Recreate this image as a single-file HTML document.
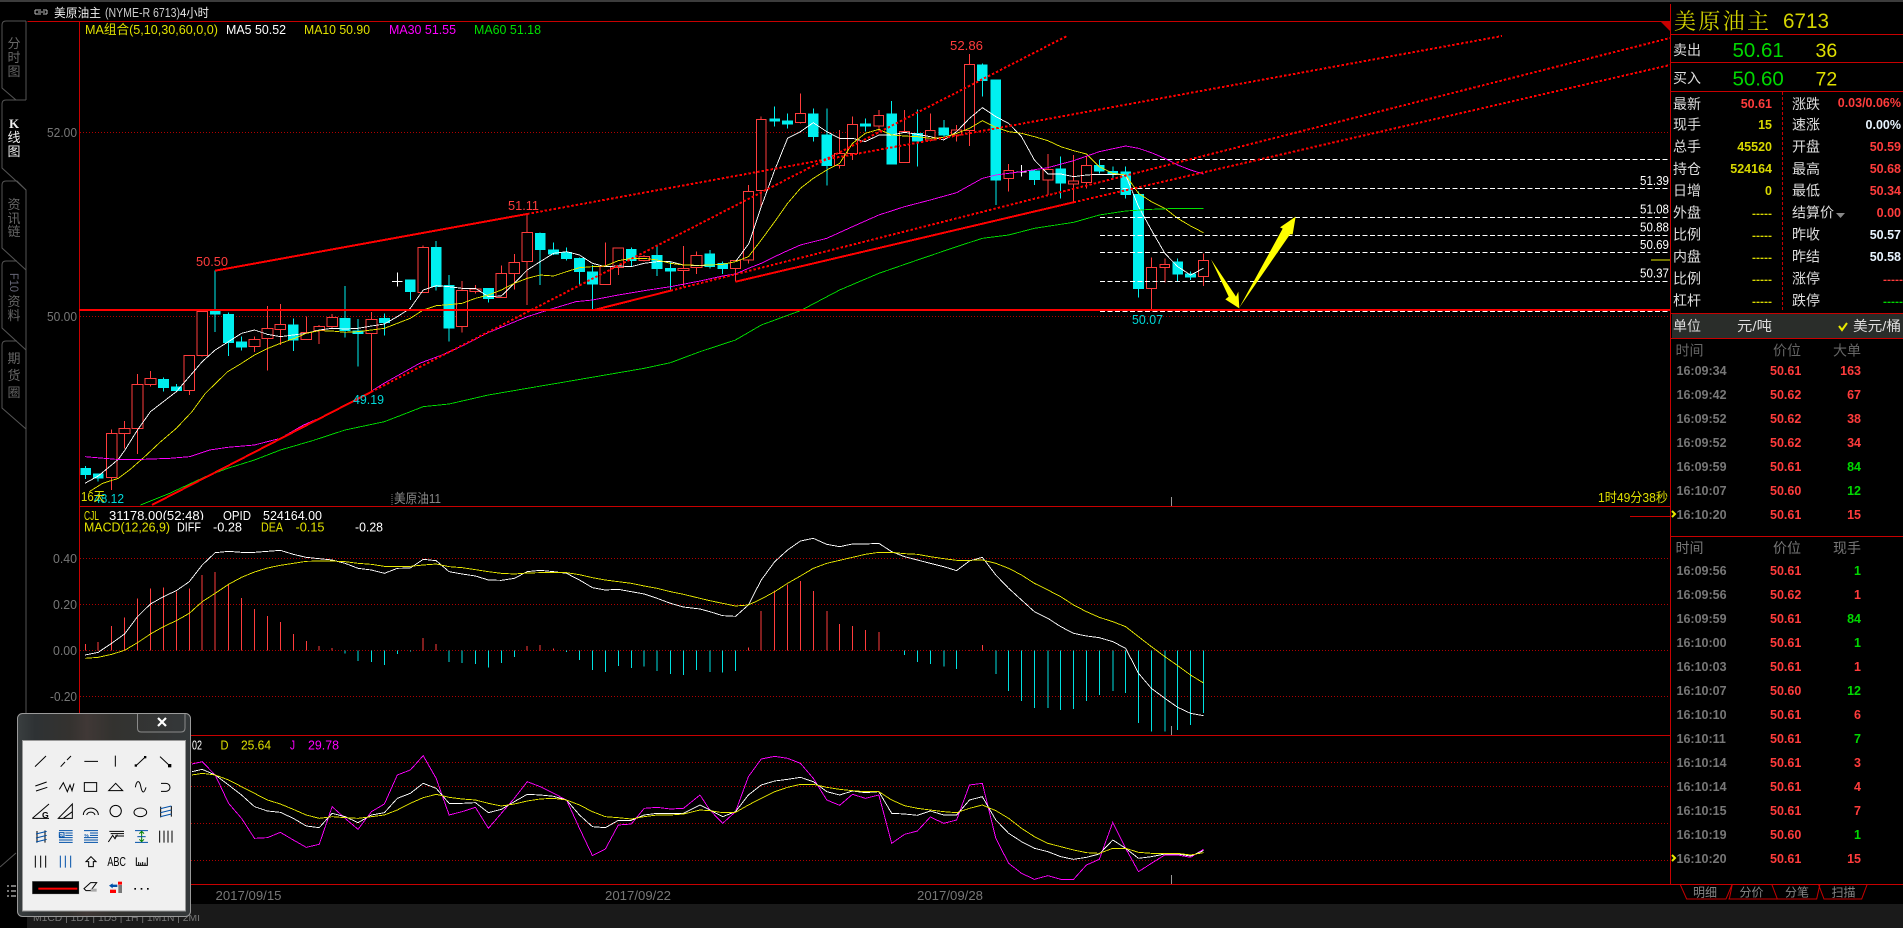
<!DOCTYPE html>
<html><head><meta charset="utf-8"><title>美原油主</title>
<style>
html,body{margin:0;padding:0;background:#000;width:1903px;height:928px;overflow:hidden}
svg{display:block}
text{font-family:"Liberation Sans","Noto Sans CJK SC",sans-serif;font-size:13px}
.cn{font-size:14px;fill:#ddd}
.b{font-weight:bold;font-size:12.5px}
.r{text-anchor:end}
.n{vector-effect:non-scaling-stroke;fill:none;shape-rendering:crispEdges}
polyline.n{stroke-width:.9}
.nn{vector-effect:non-scaling-stroke}
.g{stroke:#b00000;stroke-width:1;stroke-dasharray:1 2;fill:none}
.w{stroke:#fff;stroke-width:1;stroke-dasharray:5 2.5;fill:none;shape-rendering:crispEdges}
.d{stroke:#f00;stroke-width:2;stroke-dasharray:2.5 2;fill:none;shape-rendering:crispEdges}
.t{stroke:#f00;stroke-width:2;fill:none;shape-rendering:crispEdges}
.l{stroke:#c80000;stroke-width:1;fill:none;shape-rendering:crispEdges}
.tab{stroke:#555;stroke-width:1;fill:none}
.ic{vector-effect:non-scaling-stroke;stroke:#000;stroke-width:1;fill:none}
.bl{vector-effect:non-scaling-stroke;stroke:#0050a8;stroke-width:1;fill:none}
</style></head><body>
<svg xmlns="http://www.w3.org/2000/svg" width="1903" height="928" viewBox="0 0 1903 928">
<defs><clipPath id="c1"><rect x="80" y="507" width="400" height="13"/></clipPath>
<clipPath id="c2"><rect x="27" y="915" width="300" height="13"/></clipPath>
<linearGradient id="tb" x1="0" y1="0" x2="1" y2="0"><stop offset="0" stop-color="#3a3f40"/><stop offset=".1" stop-color="#2e3234"/><stop offset=".3" stop-color="#34322f"/><stop offset=".4" stop-color="#403836"/><stop offset=".55" stop-color="#33322f"/><stop offset="1" stop-color="#34383a"/></linearGradient></defs>
<rect width="1903" height="928" fill="#000"/>
<rect width="1903" height="2" fill="#3c3c3c"/>
<rect x="27" y="904" width="1876" height="24" fill="#1a1a1a"/>

<!-- title -->
<path d="M35 10H41M35 14H41M35 10V14M47 10H43M47 14H43M47 10V14M38 12H45" stroke="#bbb" stroke-width="1" fill="none" shape-rendering="crispEdges"/>
<text x="54" y="17" fill="#eee" style="font-size:12px" textLength="47" lengthAdjust="spacingAndGlyphs">美原油主</text>
<text x="105" y="17" fill="#ccc" textLength="75" lengthAdjust="spacingAndGlyphs">(NYME-R 6713)</text>
<text x="180" y="17" fill="#eee" style="font-size:12px" textLength="29" lengthAdjust="spacingAndGlyphs">4小时</text>

<!-- left tabs -->
<path class="tab" d="M26 21H6Q2 21 2 25V88L16 100H26M26 21V100"/>
<path class="tab" d="M26 100H6Q2 100 2 104V168L26 190"/>
<path class="tab" d="M6 181H17L26 190V900M6 181Q2 181 2 185V248L26 270"/>
<path class="tab" d="M6 261H17M6 261Q2 261 2 265V328L26 350"/>
<path class="tab" d="M6 341H17M6 341Q2 341 2 345V408L26 429"/>
<path class="tab" d="M0 867L16 853"/>
<g fill="#666" text-anchor="middle">
<text x="14" y="48" style="font-size:13px" fill="#666">分</text><text x="14" y="62" style="font-size:13px">时</text><text x="14" y="76" style="font-size:13px">图</text>
<text x="14" y="128" style="font-size:13px;font-weight:bold;font-family:'Liberation Serif',serif" fill="#eee">K</text><text x="14" y="142" style="font-size:13px" fill="#eee">线</text><text x="14" y="156" style="font-size:13px" fill="#eee">图</text>
<text x="14" y="209" style="font-size:13px">资</text><text x="14" y="223" style="font-size:13px">讯</text><text x="14" y="236" style="font-size:13px">链</text>
<text transform="translate(10,273) rotate(90)" text-anchor="start" style="font-size:12px" fill="#667" textLength="19" lengthAdjust="spacingAndGlyphs">F10</text><text x="14" y="306" style="font-size:13px">资</text><text x="14" y="320" style="font-size:13px">料</text>
<text x="14" y="363" style="font-size:13px">期</text><text x="14" y="380" style="font-size:13px">货</text><text x="14" y="397" style="font-size:13px">圈</text>
</g>
<g fill="#777"><rect x="7" y="885" width="2" height="2"/><rect x="7" y="890" width="2" height="2"/><rect x="7" y="895" width="2" height="2"/><rect x="11" y="885" width="5" height="2"/><rect x="11" y="890" width="5" height="2"/><rect x="11" y="895" width="5" height="2"/></g>

<!-- grid -->
<path class="g" d="M80 132.5H1670M80 316.5H1670M80 558.5H1670M80 604.5H1670M80 650.5H1670M80 696.5H1670M80 762.5H1670M80 786.5H1670M80 823.5H1670M80 860.5H1670"/>
<path class="l" d="M27.5 21.5H1670M79.5 21.5V884M1670.5 4V884M79 506.5H1670M79 735.5H1670M27 884.5H1903M1630 516.5H1670"/>
<path d="M1661 22H1670V31Z" fill="#c80000"/>
<path d="M1171.5 497V506M1171.5 726V735M1171.5 875V884" stroke="#999" fill="none" shape-rendering="crispEdges"/>

<!-- axis labels -->
<g fill="#777">
<text x="77" y="137" class="r" textLength="30" lengthAdjust="spacingAndGlyphs">52.00</text>
<text x="77" y="321" class="r" textLength="30" lengthAdjust="spacingAndGlyphs">50.00</text>
<text x="77" y="563" class="r" textLength="24" lengthAdjust="spacingAndGlyphs">0.40</text>
<text x="77" y="609" class="r" textLength="24" lengthAdjust="spacingAndGlyphs">0.20</text>
<text x="77" y="655" class="r" textLength="24" lengthAdjust="spacingAndGlyphs">0.00</text>
<text x="77" y="701" class="r" textLength="27" lengthAdjust="spacingAndGlyphs">-0.20</text>
<text x="215.5" y="900" textLength="66" lengthAdjust="spacingAndGlyphs">2017/09/15</text>
<text x="605" y="900" textLength="66" lengthAdjust="spacingAndGlyphs">2017/09/22</text>
<text x="917" y="900" textLength="66" lengthAdjust="spacingAndGlyphs">2017/09/28</text>
</g>

<!-- left candles -->
<g transform="scale(.44643,.33333)">
<path class="nn" shape-rendering="crispEdges" stroke="#ff3c3c" fill="#000" d="M250 1288V1300M250 1433V1470M238 1300H262V1433H238ZM279 1263V1285M279 1300V1345M267 1285H291V1300H267ZM308 1122V1153M308 1286V1362M296 1153H320V1286H296ZM337 1113V1135M337 1153V1160M325 1135H349V1153H325ZM424 1171V1185M412 1066H436V1171H412ZM453 1067V1070M441 934H465V1067H441ZM570 1010V1019M570 1039V1056M558 1019H582V1039H558ZM599 918V986M599 1015V1112M587 986H611V1015H587ZM628 912V973M628 988V1035M616 973H640V988H616ZM686 950V998M674 998H698V1019H674ZM715 975V980M715 992V1032M703 980H727V992H703ZM744 942V952M744 980V985M732 952H756V980H732ZM832 936V958M832 1000V1175M820 958H844V1000H820ZM948 737V742M936 742H960V878H936ZM1035 843V871M1035 980V997M1023 871H1047V980H1023ZM1065 855V867M1065 875V880M1053 867H1077V875H1053ZM1123 797V820M1111 820H1135V892H1111ZM1152 762V787M1152 820V868M1140 787H1164V820H1140ZM1181 640V697M1181 785V915M1169 697H1193V785H1169ZM1356 727V800M1344 800H1368V853H1344ZM1385 742V744M1385 802V825M1373 744H1397V802H1373ZM1443 765V770M1443 782V785M1431 770H1455V782H1431ZM1531 738V806M1531 812V860M1519 806H1543V812H1519ZM1560 755V767M1560 802V822M1548 767H1572V802H1548Z"/>
<path class="nn" shape-rendering="crispEdges" stroke="#00f0f0" fill="#00f0f0" d="M192 1398V1437M181 1405H203V1424H181ZM220 1422V1445M209 1422H231V1434H209ZM366 1132V1175M355 1138H377V1163H355ZM395 1152V1175M384 1161H406V1172H384ZM482 812V996M471 934H493V942H471ZM512 937V1068M501 943H523V1028H501ZM541 1010V1052M530 1026H552V1041H530ZM657 955V1053M646 975H668V1020H646ZM773 858V1013M762 955H784V992H762ZM802 957V1100M791 993H813V1001H791ZM861 940V1007M850 955H872V968H850ZM919 838V900M908 840H930V875H908ZM977 723V872M966 742H988V860H966ZM1006 825V1025M995 856H1017V984H995ZM1094 865V908M1083 865H1105V896H1083ZM1210 697V855M1199 700H1221V749H1199ZM1240 728V765M1229 750H1251V762H1229ZM1269 742V782M1258 758H1280V776H1258ZM1298 772V855M1287 775H1309V815H1287ZM1327 795V927M1316 816H1338V852H1316ZM1414 742V800M1403 748H1425V782H1403ZM1472 738V828M1461 766H1483V806H1461ZM1502 785V868M1491 805H1513V813H1491Z"/>
<path class="nn" shape-rendering="crispEdges" stroke="#fff" fill="none" d="M878 845H902M890 817V860"/>
<polyline class="n" stroke="#fff" points="190,1450 220,1428 250,1395 265,1378 280,1350 308,1290 337,1235 366,1205 395,1175 424,1130 453,1085 482,1050 512,1025 541,1000 570,990 599,1003 628,1010 657,1005 686,1000 715,990 744,985 773,987 802,985 832,978 861,972 890,950 919,925 948,870 977,857 1006,860 1035,865 1065,865 1094,890 1123,888 1152,850 1181,810 1210,785 1240,760 1269,755 1298,765 1327,790 1356,800 1385,798 1414,800 1443,790 1472,785 1502,785 1531,795 1568,797"/>
<polyline class="n" stroke="#e8e800" points="200,1475 230,1450 265,1435 290,1410 320,1375 360,1325 395,1285 430,1235 460,1180 510,1115 541,1090 570,1065 600,1045 628,1030 660,1015 686,1000 715,992 744,993 773,997 802,995 832,990 861,985 890,970 919,955 948,930 977,917 1006,914 1035,910 1065,895 1094,885 1123,870 1152,850 1181,835 1210,825 1240,828 1269,815 1298,803 1327,800 1356,798 1385,782 1414,775 1443,775 1472,780 1502,790 1531,795 1568,796"/>
<polyline class="n" stroke="#f0f" points="190,1370 260,1378 320,1378 380,1375 425,1370 470,1350 510,1342 570,1335 628,1315 680,1275 740,1240 800,1200 860,1150 940,1090 990,1065 1040,1035 1090,1000 1181,950 1240,925 1290,905 1327,900 1385,885 1443,872 1502,860 1568,843"/>
<polyline class="n" stroke="#00e000" points="315,1515 380,1480 460,1430 510,1405 570,1380 628,1350 700,1322 773,1290 861,1265 900,1245 948,1220 1006,1212 1094,1185 1181,1165 1269,1145 1356,1125 1443,1105 1502,1088 1568,1055"/>
</g>
<!-- right candles -->
<g transform="translate(700,0) scale(.61245,.33333)">
<path class="nn" shape-rendering="crispEdges" stroke="#ff3c3c" fill="#000" d="M58 806V845M50 782H66V806H50ZM79 555V574M79 780V790M71 574H87V780H71ZM100 350V358M100 572V620M92 358H108V572H92ZM164 280V340M164 368V370M156 340H172V368H156ZM228 390V460M228 497V505M220 460H236V497H220ZM249 350V373M249 460V480M241 373H257V460H241ZM292 330V346M292 378V395M284 346H300V378H284ZM334 330V395M326 395H342V488H326ZM376 340V392M376 420V425M368 392H384V420H368ZM419 375V390M419 405V425M411 390H427V405H411ZM440 162V193M440 392V438M432 193H448V392H432ZM504 492V511M504 536V575M496 511H512V536H496ZM568 462V508M568 540V585M560 508H576V540H560ZM610 465V543M610 552V608M602 543H618V552H602ZM631 470V496M631 548V565M623 496H639V548H623ZM737 773V802M737 866V927M729 802H745V866H729ZM759 775V793M759 803V848M751 793H767V803H751ZM822 760V781M822 830V858M814 781H830V830H814Z"/>
<path class="nn" shape-rendering="crispEdges" stroke="#00f0f0" fill="#00f0f0" d="M16 750V805M8 762H24V800H8ZM37 785V822M29 790H45V806H29ZM122 320V380M114 357H130V363H114ZM143 340V385M135 363H151V372H135ZM185 325V425M177 342H193V410H177ZM207 325V557M199 405H215V497H199ZM270 355V395M262 372H278V378H262ZM313 303V492M305 342H321V492H305ZM355 328V500M347 400H363V423H347ZM398 360V420M390 384H406V405H390ZM461 190V290M453 195H469V242H453ZM483 240V615M475 240H491V540H475ZM546 510V555M538 513H554V538H538ZM589 470V595M581 507H597V549H581ZM652 478V520M644 496H660V513H644ZM674 500V540M666 514H682V521H666ZM695 500V595M687 516H703V584H687ZM716 575V893M708 584H724V866H708ZM780 775V845M772 786H788V822H772ZM801 815V840M793 822H809V831H793Z"/>
<path class="nn" shape-rendering="crispEdges" stroke="#fff" fill="none" d="M517 516H533M525 495V530"/>
<polyline class="n" stroke="#fff" points="0,797 16,795 37,793 58,785 80,730 100,620 122,510 143,415 164,395 185,368 207,395 228,415 249,415 270,425 292,405 313,405 334,397 355,403 376,410 398,420 419,395 440,355 461,323 483,350 504,370 525,410 546,480 568,522 589,522 610,530 631,525 652,523 674,523 695,525 716,620 737,690 759,760 780,800 801,825 822,805"/>
<polyline class="n" stroke="#e8e800" points="0,796 16,795 37,793 58,785 79,770 100,720 122,665 143,610 164,565 185,535 207,510 228,490 249,430 270,400 292,388 313,405 334,408 355,410 376,415 398,412 419,400 440,385 461,362 483,382 504,395 525,400 546,410 568,422 589,440 610,452 631,462 652,500 674,520 695,525 716,580 737,605 759,625 780,655 801,678 822,698"/>
<polyline class="n" stroke="#f0f" points="0,843 37,828 58,822 79,805 100,790 122,770 143,752 164,735 207,715 249,680 292,645 334,620 376,600 419,578 461,535 483,525 525,515 568,503 610,482 652,455 695,438 716,445 737,458 759,475 780,495 801,510 822,522"/>
<polyline class="n" stroke="#00e000" points="0,1055 58,1020 100,975 164,932 228,870 292,820 355,780 419,740 461,715 504,705 546,685 610,667 652,645 695,633 737,628 780,625 822,625"/>
</g>

<!-- drawn lines -->
<path class="t" d="M79 310H1670"/>
<path class="w" d="M1100 159.5H1670M1100 188.5H1670M1100 217.5H1670M1100 235.5H1670M1100 252.5H1670M1100 281.5H1670M1100 311.5H1670"/>
<path class="t" d="M215 270.7L527 214M152 505L371 392M594 310L670.5 290.7M735.5 281.7L1073.5 202.3"/>
<path class="d" d="M527 214L1502 36M371 392L1067 36M670.5 290.7L1670 38M1073.5 202.3L1670 65"/>
<path d="M1651 260H1670" stroke="#e8e800" shape-rendering="crispEdges"/>
<g transform="translate(1100,140) scale(.33333)" fill="#ff0">
<polygon points="333,358 408,470 415,455 418,505 376,478 386,470"/>
<polygon points="418,503 570,283 578,283 587,230 540,262 548,266"/>
</g>

<!-- chart labels -->
<text x="85" y="34" fill="#e0e000" textLength="133" lengthAdjust="spacingAndGlyphs">MA组合(5,10,30,60,0,0)</text>
<text x="226" y="34" fill="#fff" textLength="60" lengthAdjust="spacingAndGlyphs">MA5 50.52</text>
<text x="304" y="34" fill="#e0e000" textLength="66" lengthAdjust="spacingAndGlyphs">MA10 50.90</text>
<text x="389" y="34" fill="#f0f" textLength="67" lengthAdjust="spacingAndGlyphs">MA30 51.55</text>
<text x="474" y="34" fill="#00e000" textLength="67" lengthAdjust="spacingAndGlyphs">MA60 51.18</text>
<text x="196" y="266" fill="#ff3c3c" textLength="32" lengthAdjust="spacingAndGlyphs">50.50</text>
<text x="508" y="210" fill="#ff3c3c" textLength="31" lengthAdjust="spacingAndGlyphs">51.11</text>
<text x="950" y="50" fill="#ff3c3c" textLength="33" lengthAdjust="spacingAndGlyphs">52.86</text>
<text x="353" y="404" fill="#00d8d8" textLength="31" lengthAdjust="spacingAndGlyphs">49.19</text>
<text x="1132" y="324" fill="#00d8d8" textLength="31" lengthAdjust="spacingAndGlyphs">50.07</text>
<text x="94" y="503" fill="#00d8d8" textLength="30" lengthAdjust="spacingAndGlyphs">48.12</text>
<text x="81" y="501" fill="#e0e000" textLength="24" lengthAdjust="spacingAndGlyphs">16天</text>
<text x="394" y="503" fill="#888" textLength="47" lengthAdjust="spacingAndGlyphs">美原油11</text>
<path d="M392 494V505" stroke="#777" stroke-dasharray="1 1" shape-rendering="crispEdges"/>
<text x="1598" y="502" fill="#e0e000" textLength="70" lengthAdjust="spacingAndGlyphs">1时49分38秒</text>
<g fill="#fff">
<text x="1640" y="185" textLength="29" lengthAdjust="spacingAndGlyphs">51.39</text>
<text x="1640" y="213.5" textLength="29" lengthAdjust="spacingAndGlyphs">51.08</text>
<text x="1640" y="231.5" textLength="29" lengthAdjust="spacingAndGlyphs">50.88</text>
<text x="1640" y="249" textLength="29" lengthAdjust="spacingAndGlyphs">50.69</text>
<text x="1640" y="277.5" textLength="29" lengthAdjust="spacingAndGlyphs">50.37</text>
</g>

<!-- MACD headers -->
<g clip-path="url(#c1)">
<text x="84" y="520" fill="#e0e000" textLength="15" lengthAdjust="spacingAndGlyphs">CJL</text>
<text x="109" y="520" fill="#fff" textLength="95" lengthAdjust="spacingAndGlyphs">31178.00(52:48)</text>
<text x="223" y="520" fill="#fff" textLength="28" lengthAdjust="spacingAndGlyphs">OPID</text>
<text x="263" y="520" fill="#fff" textLength="59" lengthAdjust="spacingAndGlyphs">524164.00</text>
</g>
<text x="84" y="531.5" fill="#e0e000" textLength="86" lengthAdjust="spacingAndGlyphs">MACD(12,26,9)</text>
<text x="177" y="531.5" fill="#fff" textLength="24" lengthAdjust="spacingAndGlyphs">DIFF</text>
<text x="213" y="531.5" fill="#fff" textLength="29" lengthAdjust="spacingAndGlyphs">-0.28</text>
<text x="261" y="531.5" fill="#e0e000" textLength="22" lengthAdjust="spacingAndGlyphs">DEA</text>
<text x="295.5" y="531.5" fill="#e0e000" textLength="29" lengthAdjust="spacingAndGlyphs">-0.15</text>
<text x="355" y="531.5" fill="#fff" textLength="28" lengthAdjust="spacingAndGlyphs">-0.28</text>
<text x="192" y="749.5" fill="#fff" textLength="10" lengthAdjust="spacingAndGlyphs">02</text>
<text x="220.5" y="749.5" fill="#e0e000" textLength="8" lengthAdjust="spacingAndGlyphs">D</text>
<text x="241" y="749.5" fill="#e0e000" textLength="30" lengthAdjust="spacingAndGlyphs">25.64</text>
<text x="290" y="749.5" fill="#f0f" textLength="5" lengthAdjust="spacingAndGlyphs">J</text>
<text x="308" y="749.5" fill="#f0f" textLength="31" lengthAdjust="spacingAndGlyphs">29.78</text>

<!-- MACD / KDJ left -->
<g transform="translate(0,500) scale(.44643,.33333)">
<path class="n" stroke="#ff3c3c" d="M192 452V432M220 452V426M250 452V378M279 452V352M308 452V295M337 452V265M366 452V262M395 452V275M424 452V265M453 452V225M482 452V216M512 452V255M541 452V294M570 452V327M599 452V348M628 452V366M657 452V402M686 452V423M715 452V438M744 452V444M948 452V414M977 452V432M1181 452V438M1210 452V435M1240 452V445"/>
<path class="n" stroke="#00e0e0" d="M773 452V461M802 452V483M832 452V486M861 452V495M890 452V462M919 452V454M1006 452V486M1035 452V489M1065 452V492M1094 452V503M1123 452V489M1152 452V471M1269 452V456M1298 452V480M1327 452V510M1356 452V516M1385 452V498M1414 452V504M1443 452V500M1472 452V513M1502 452V522M1531 452V525M1560 452V510"/>
<polyline class="n" stroke="#fff" points="190,465 220,457 250,430 279,402 308,350 337,312 366,290 395,272 424,245 453,195 482,158 512,154 541,157 570,157 599,154 628,151 657,163 686,172 715,176 744,180 773,190 802,205 832,210 861,220 890,205 919,204 948,178 977,182 1006,215 1035,222 1065,228 1094,240 1123,241 1152,235 1181,215 1210,211 1240,215 1269,220 1298,240 1327,263 1356,270 1385,268 1414,275 1443,282 1472,295 1502,310 1531,321 1568,327"/>
<polyline class="n" stroke="#e8e800" points="190,475 220,472 250,463 279,451 308,428 337,402 366,380 395,362 424,340 453,305 482,280 512,253 541,232 570,216 599,204 628,196 657,190 686,184 715,183 744,183 773,185 802,190 832,193 861,199 890,199 919,199 948,195 977,192 1006,200 1035,203 1065,209 1094,215 1123,220 1152,222 1181,219 1210,218 1240,217 1269,218 1298,224 1327,233 1356,240 1385,245 1414,250 1443,258 1472,265 1502,275 1531,283 1568,295"/>
<polyline class="n" stroke="#f0f" points="430,792 453,785 482,825 512,910 541,955 570,1015 599,1013 628,997 657,1020 686,1042 715,1033 744,920 773,955 802,988 832,935 861,912 890,825 919,810 948,767 977,835 1006,945 1035,935 1065,922 1094,985 1123,940 1152,895 1181,845 1210,860 1240,880 1269,900 1298,985 1327,1067 1356,1047 1385,975 1414,972 1443,925 1472,922 1502,927 1531,925 1568,885"/>
<polyline class="n" stroke="#fff" points="430,815 453,808 482,825 512,855 541,885 570,920 599,933 628,937 657,955 686,978 715,983 744,940 773,950 802,968 832,945 861,938 890,895 919,880 948,850 977,865 1006,910 1035,910 1065,908 1094,938 1123,928 1152,905 1181,883 1210,885 1240,889 1269,900 1298,945 1327,980 1356,983 1385,961 1414,961 1443,945 1472,940 1502,940 1531,940 1568,915"/>
<polyline class="n" stroke="#e8e800" points="430,825 453,820 482,825 512,840 541,860 570,880 599,900 628,912 657,928 686,945 715,955 744,950 773,953 802,955 832,950 861,945 890,930 919,910 948,893 977,883 1006,892 1035,897 1065,900 1094,910 1123,918 1152,912 1181,903 1210,897 1240,895 1269,900 1298,915 1327,935 1356,950 1385,953 1414,957 1443,950 1472,945 1502,945 1531,942 1568,930"/>
</g>
<!-- MACD / KDJ right -->
<g transform="translate(700,500) scale(.61245,.33333)">
<path class="n" stroke="#ff3c3c" d="M79 452V443M100 452V333M122 452V272M143 452V253M164 452V243M185 452V273M207 452V333M228 452V372M249 452V378M270 452V390M292 452V396M440 452V450M461 452V435"/>
<path class="n" stroke="#00e0e0" d="M16 452V516M37 452V518M58 452V513M313 452V453M334 452V465M355 452V486M376 452V492M398 452V500M419 452V507M483 452V522M504 452V573M525 452V603M546 452V624M568 452V624M589 452V630M610 452V627M631 452V603M652 452V585M674 452V573M695 452V579M716 452V669M737 452V695M759 452V695M780 452V690M801 452V675M822 452V639"/>
<polyline class="n" stroke="#fff" points="0,327 16,335 37,347 58,349 79,315 100,240 122,185 143,150 164,123 185,115 207,133 228,140 249,132 270,132 292,130 313,155 334,170 355,180 376,190 398,200 419,212 440,183 461,172 483,225 504,265 525,300 546,335 568,355 589,380 610,400 631,408 652,413 674,425 695,445 716,520 737,565 759,595 780,622 801,640 822,647"/>
<polyline class="n" stroke="#e8e800" points="0,295 16,302 37,310 58,318 79,315 100,297 122,275 143,250 164,228 185,205 207,190 228,181 249,172 270,163 292,157 313,157 334,161 355,163 376,170 398,176 419,181 440,181 461,180 483,190 504,205 525,225 546,250 568,270 589,290 610,315 631,335 652,352 674,365 695,380 716,410 737,440 759,470 780,497 801,525 822,549"/>
<polyline class="n" stroke="#f0f" points="0,885 16,930 37,970 58,935 79,830 100,777 122,769 143,775 164,790 185,835 207,900 228,916 249,883 270,895 292,885 313,1030 334,1003 355,993 376,951 398,970 419,960 440,855 461,850 483,1015 504,1090 525,1120 546,1138 568,1127 589,1138 610,1138 631,1095 652,1078 674,967 695,1045 716,1115 737,1090 759,1065 780,1065 801,1072 822,1048"/>
<polyline class="n" stroke="#fff" points="0,915 16,930 37,950 58,935 79,885 100,855 122,843 143,838 164,832 185,845 207,875 228,885 249,873 270,878 292,875 313,940 334,942 355,946 376,933 398,945 419,945 440,900 461,890 483,960 504,1000 525,1025 546,1045 568,1055 589,1070 610,1078 631,1072 652,1062 674,1020 695,1045 716,1075 737,1070 759,1062 780,1062 801,1068 822,1052"/>
<polyline class="n" stroke="#e8e800" points="0,930 16,932 37,938 58,937 79,915 100,895 122,875 143,862 164,853 185,853 207,862 228,868 249,872 270,875 292,875 313,900 334,917 355,925 376,930 398,935 419,938 440,925 461,915 483,932 504,955 525,985 546,1010 568,1030 589,1040 610,1050 631,1058 652,1060 674,1045 695,1045 716,1057 737,1060 759,1060 780,1060 801,1065 822,1058"/>
</g>

<!-- right panel -->
<text x="1674" y="29" style="font-size:22px;font-family:'Noto Serif CJK SC','Liberation Sans',serif" fill="#d4d400" textLength="95" lengthAdjust="spacing">美原油主</text>
<text x="1783" y="28" style="font-size:21px" fill="#d4d400" textLength="46" lengthAdjust="spacingAndGlyphs">6713</text>
<path class="l" d="M1670 34.5H1903M1670 62.5H1903M1670 91.5H1903M1670 313.5H1903M1670 338.5H1903M1670 536.5H1903"/>
<path d="M1782.5 92V311" stroke="#c80000" stroke-dasharray="3 2" shape-rendering="crispEdges"/>
<text x="1673" y="55" class="cn">卖出</text><text x="1673" y="83" class="cn">买入</text>
<text x="1732.5" y="57" style="font-size:20.5px" fill="#00d800">50.61</text>
<text x="1732.5" y="85.5" style="font-size:20.5px" fill="#00d800">50.60</text>
<text x="1815.5" y="57" style="font-size:19.5px" fill="#e0e000">36</text>
<text x="1815.5" y="85.5" style="font-size:19.5px" fill="#e0e000">72</text>
<g class="cn">
<text x="1673" y="109" class="cn">最新</text><text x="1673" y="129.5" class="cn">现手</text><text x="1673" y="151.5" class="cn">总手</text><text x="1673" y="174" class="cn">持仓</text><text x="1673" y="195.5" class="cn">日增</text><text x="1673" y="217.5" class="cn">外盘</text><text x="1673" y="239.5" class="cn">比例</text><text x="1673" y="261.5" class="cn">内盘</text><text x="1673" y="283.5" class="cn">比例</text><text x="1673" y="305.5" class="cn">杠杆</text>
<text x="1792" y="109" class="cn">涨跌</text><text x="1792" y="129.5" class="cn">速涨</text><text x="1792" y="151.5" class="cn">开盘</text><text x="1792" y="174" class="cn">最高</text><text x="1792" y="195.5" class="cn">最低</text><text x="1792" y="217.5" class="cn">结算价</text><text x="1792" y="239.5" class="cn">昨收</text><text x="1792" y="261.5" class="cn">昨结</text><text x="1792" y="283.5" class="cn">涨停</text><text x="1792" y="305.5" class="cn">跌停</text>
</g>
<path d="M1836 213H1845L1840.5 218Z" fill="#888"/>
<g class="b">
<text x="1772" y="108" class="b r" fill="#ff3c3c">50.61</text>
<text x="1772" y="129" class="b r" fill="#d8d800">15</text>
<text x="1772" y="151" class="b r" fill="#d8d800">45520</text>
<text x="1772" y="173" class="b r" fill="#d8d800">524164</text>
<text x="1772" y="195" class="b r" fill="#d8d800">0</text>
<text x="1772" y="217" class="r" style="font-size:11px" fill="#d8d800" textLength="20" lengthAdjust="spacingAndGlyphs">-----</text>
<text x="1772" y="239" class="r" style="font-size:11px" fill="#d8d800" textLength="20" lengthAdjust="spacingAndGlyphs">-----</text>
<text x="1772" y="261" class="r" style="font-size:11px" fill="#d8d800" textLength="20" lengthAdjust="spacingAndGlyphs">-----</text>
<text x="1772" y="283" class="r" style="font-size:11px" fill="#d8d800" textLength="20" lengthAdjust="spacingAndGlyphs">-----</text>
<text x="1772" y="305" class="r" style="font-size:11px" fill="#d8d800" textLength="20" lengthAdjust="spacingAndGlyphs">-----</text>
<text x="1901" y="107" class="b r" fill="#ff3c3c">0.03/0.06%</text>
<text x="1901" y="129" class="b r" fill="#e8f4ff">0.00%</text>
<text x="1901" y="151" class="b r" fill="#ff3c3c">50.59</text>
<text x="1901" y="173" class="b r" fill="#ff3c3c">50.68</text>
<text x="1901" y="195" class="b r" fill="#ff3c3c">50.34</text>
<text x="1901" y="217" class="b r" fill="#ff3c3c">0.00</text>
<text x="1901" y="239" class="b r" fill="#e8f4ff">50.57</text>
<text x="1901" y="261" class="b r" fill="#e8f4ff">50.58</text>
<text x="1903" y="283" class="r" style="font-size:11px" fill="#ff3c3c" textLength="20" lengthAdjust="spacingAndGlyphs">-----</text>
<text x="1903" y="305" class="r" style="font-size:11px" fill="#00d800" textLength="20" lengthAdjust="spacingAndGlyphs">-----</text>
</g>
<rect x="1672" y="314" width="231" height="24" fill="#2a2d2a"/>
<text x="1673" y="331" class="cn">单位</text>
<text x="1737" y="331" class="cn" textLength="35" lengthAdjust="spacingAndGlyphs">元/吨</text>
<path d="M1839 326L1842 330L1847 323" stroke="#e8e800" stroke-width="2" fill="none"/>
<text x="1853" y="331" class="cn" textLength="48" lengthAdjust="spacingAndGlyphs">美元/桶</text>

<text x="1675.5" y="355.5" class="cn" style="fill:#666">时间</text><text x="1773" y="355.5" class="cn" style="fill:#666">价位</text><text x="1833" y="355.5" class="cn" style="fill:#666">大单</text>
<text x="1675.5" y="553" class="cn" style="fill:#777">时间</text><text x="1773" y="553" class="cn" style="fill:#777">价位</text><text x="1833" y="553" class="cn" style="fill:#777">现手</text>

<g style="font-weight:bold">
<g fill="#777">
<text x="1676.5" y="375" class="b">16:09:34</text><text x="1676.5" y="399" class="b">16:09:42</text><text x="1676.5" y="423" class="b">16:09:52</text><text x="1676.5" y="447" class="b">16:09:52</text><text x="1676.5" y="471" class="b">16:09:59</text><text x="1676.5" y="495" class="b">16:10:07</text><text x="1676.5" y="519" class="b">16:10:20</text>
<text x="1676.5" y="575" class="b">16:09:56</text><text x="1676.5" y="599" class="b">16:09:56</text><text x="1676.5" y="623" class="b">16:09:59</text><text x="1676.5" y="647" class="b">16:10:00</text><text x="1676.5" y="671" class="b">16:10:03</text><text x="1676.5" y="695" class="b">16:10:07</text><text x="1676.5" y="719" class="b">16:10:10</text><text x="1676.5" y="743" class="b">16:10:11</text><text x="1676.5" y="767" class="b">16:10:14</text><text x="1676.5" y="791" class="b">16:10:14</text><text x="1676.5" y="815" class="b">16:10:15</text><text x="1676.5" y="839" class="b">16:10:19</text><text x="1676.5" y="863" class="b">16:10:20</text>
</g>
<g fill="#ff3c3c">
<text x="1770" y="375" class="b">50.61</text><text x="1770" y="399" class="b">50.62</text><text x="1770" y="423" class="b">50.62</text><text x="1770" y="447" class="b">50.62</text><text x="1770" y="471" class="b">50.61</text><text x="1770" y="495" class="b">50.60</text><text x="1770" y="519" class="b">50.61</text>
<text x="1770" y="575" class="b">50.61</text><text x="1770" y="599" class="b">50.62</text><text x="1770" y="623" class="b">50.61</text><text x="1770" y="647" class="b">50.61</text><text x="1770" y="671" class="b">50.61</text><text x="1770" y="695" class="b">50.60</text><text x="1770" y="719" class="b">50.61</text><text x="1770" y="743" class="b">50.61</text><text x="1770" y="767" class="b">50.61</text><text x="1770" y="791" class="b">50.61</text><text x="1770" y="815" class="b">50.61</text><text x="1770" y="839" class="b">50.60</text><text x="1770" y="863" class="b">50.61</text>
</g>
<text x="1861" y="375" class="b r" fill="#ff3c3c">163</text><text x="1861" y="399" class="b r" fill="#ff3c3c">67</text><text x="1861" y="423" class="b r" fill="#ff3c3c">38</text><text x="1861" y="447" class="b r" fill="#ff3c3c">34</text><text x="1861" y="471" class="b r" fill="#00d800">84</text><text x="1861" y="495" class="b r" fill="#00d800">12</text><text x="1861" y="519" class="b r" fill="#ff3c3c">15</text>
<text x="1861" y="575" class="b r" fill="#00d800">1</text><text x="1861" y="599" class="b r" fill="#ff3c3c">1</text><text x="1861" y="623" class="b r" fill="#00d800">84</text><text x="1861" y="647" class="b r" fill="#00d800">1</text><text x="1861" y="671" class="b r" fill="#ff3c3c">1</text><text x="1861" y="695" class="b r" fill="#00d800">12</text><text x="1861" y="719" class="b r" fill="#ff3c3c">6</text><text x="1861" y="743" class="b r" fill="#00d800">7</text><text x="1861" y="767" class="b r" fill="#ff3c3c">3</text><text x="1861" y="791" class="b r" fill="#ff3c3c">4</text><text x="1861" y="815" class="b r" fill="#ff3c3c">7</text><text x="1861" y="839" class="b r" fill="#00d800">1</text><text x="1861" y="863" class="b r" fill="#ff3c3c">15</text>
</g>
<path d="M1672 511L1675 514L1672 517M1672 855L1675 858L1672 861" stroke="#e8e800" stroke-width="2" fill="none"/>

<!-- bottom tabs -->
<g transform="translate(1670,878) scale(.33333)">
<path class="nn" stroke="#c80000" fill="none" d="M30 18L50 63H168L187 18M178 63L187 18M175 63H322L305 18M322 63H440L450 18M445 18L462 63H575L592 18"/>
</g>
<g style="font-size:12px" text-anchor="middle">
<text x="1705" y="896.5" fill="#888" style="font-size:12px">明细</text>
<text x="1751.5" y="896.5" fill="#888" style="font-size:12px">分价</text>
<text x="1797" y="896.5" fill="#888" style="font-size:12px">分笔</text>
<text x="1843.5" y="896.5" fill="#888" style="font-size:12px">扫描</text>
</g>

<!-- bottom bar text -->
<g clip-path="url(#c2)"><text x="33" y="921" fill="#777" style="font-size:10px" textLength="167" lengthAdjust="spacingAndGlyphs">M1CD | 1D1 | 1D5 | 1H | 1M1N | 2MI</text></g>

<!-- toolbox -->
<rect x="17.5" y="713.5" width="173" height="203" rx="5" fill="url(#tb)" stroke="#9a9a9a"/>
<path d="M137.5 714V728Q137.5 732 141 732H181Q185 732 185 728V714" fill="none" stroke="#8a8a8a"/>
<path d="M158 718L166 726M166 718L158 726" stroke="#fff" stroke-width="2.2"/>
<rect x="22.5" y="740.5" width="163" height="170.5" fill="#f0f0f0" stroke="#999"/>
<g transform="translate(0,700) scale(.33333)" fill="none">
<path class="ic" d="M105 200L138 168M182 200L195 186M201 180L213 168M253 184H294M346 167V200"/>
<path class="ic" d="M407 198L437 170"/><rect x="404" y="193" width="7" height="7" fill="#000"/><rect x="432" y="168" width="7" height="7" fill="#000"/>
<path class="ic" d="M480 170L512 200"/><rect x="504" y="192" width="10" height="10" fill="#000"/>
<path class="ic" d="M106 258L140 246M108 273L142 262M178 268L190 248L202 275L210 255L216 272L222 250"/>
<rect class="ic" x="253" y="248" width="37" height="26"/>
<path class="ic" d="M326 272L347 250L368 272Z"/>
<path class="ic" d="M406 262C410 240 418 240 422 258C426 280 432 282 438 262M483 250H498A12 12 0 0 1 498 274H483"/>
<path class="ic" d="M97 355L147 312M97 355H147"/>
<text x="126" y="354" style="font-size:26px;font-weight:bold" fill="#000">G</text>
<path class="ic" d="M175 355L217 312V355ZM190 355L217 335"/>
<path class="ic" d="M250 345A22 20 0 0 1 295 345M260 345A13 12 0 0 1 285 345"/>
<circle class="ic" cx="347" cy="333" r="17"/><ellipse class="ic" cx="421" cy="337" rx="19" ry="13"/>
<path class="ic" d="M482 320V352M514 318V350"/>
<path class="bl" d="M482 326L514 318M482 338L514 330M482 350L514 342"/>
<path class="ic" d="M111 393V428M135 391V428"/>
<path class="bl" d="M108 402L140 394M108 414L140 406M108 426L140 418"/>
<path class="bl" d="M177 392H218M196 399H218M196 406H218M177 413H218M177 420H218M177 427H218"/>
<rect class="bl" x="178" y="398" width="14" height="13"/>
<text x="178" y="411" style="font-size:14px;font-weight:bold" fill="#0050a8">G</text>
<path class="bl" d="M252 392H294M270 399H294M270 406H294M252 413H294M252 420H294M252 427H294"/>
<text x="253" y="411" style="font-size:15px;font-weight:bold" fill="#0050a8">%</text>
<path class="ic" d="M328 394H372M332 401H372M345 408H372M325 426L338 406L345 416L352 404"/>
<path class="bl" d="M405 392H444M405 427H444"/>
<path class="ic" style="stroke:#008000" d="M425 394V425M418 401L425 394L432 401M418 418L425 425L432 418"/>
<path class="bl" d="M412 410H437"/>
<path class="ic" d="M479 392V428M492 392V428M504 392V428M516 392V428M106 467V503M122 467V503M137 467V503"/>
<path class="bl" d="M181 467V503M196 467V503M212 467V503"/>
<path class="ic" d="M273 470L258 485H266V500H280V485H288Z"/>
<text x="322" y="498" style="font-size:39px" fill="#000" textLength="56" lengthAdjust="spacingAndGlyphs">ABC</text>
<path class="ic" d="M409 472V496H442V472M416 486V496M422 488V496M428 486V496M435 488V496"/>
<rect x="97" y="544" width="140" height="38" fill="#000" stroke="#888"/>
<rect x="115" y="563" width="117" height="6" fill="#f00"/>
<path class="ic" d="M252 566L272 548H290L272 572H258Z"/><rect x="272" y="566" width="18" height="9" fill="#aaa"/>
<path d="M327 557L338 550V554H352V561H338V565Z" fill="#0050a8"/>
<rect x="330" y="569" width="18" height="10" fill="#f00"/>
<rect x="354" y="545" width="12" height="9" fill="#f00"/>
<path class="ic" d="M355 558H366M355 564H366M355 570H366M355 576H366"/>
<rect x="403" y="564" width="5" height="5" fill="#000"/><rect x="422" y="564" width="5" height="5" fill="#000"/><rect x="441" y="564" width="5" height="5" fill="#000"/>
</g>
</svg>
</body></html>
